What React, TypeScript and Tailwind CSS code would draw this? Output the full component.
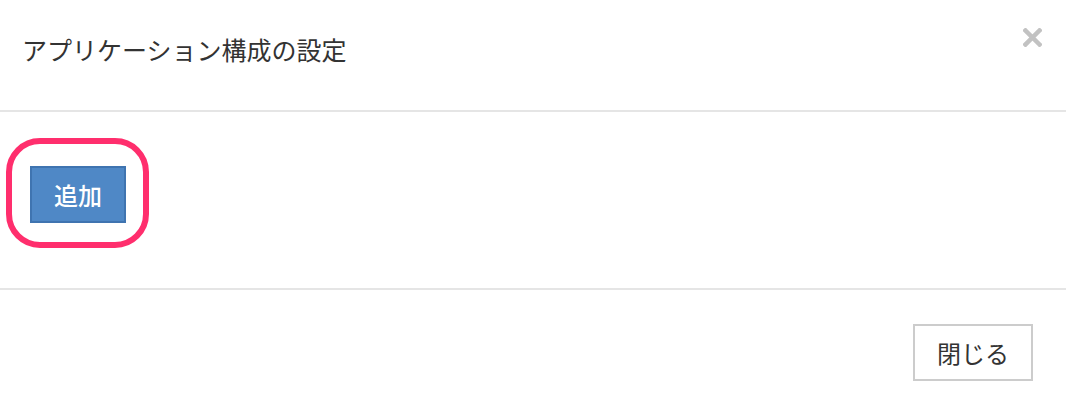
export default function App() {
  const font = { fontFamily: '"Noto Sans CJK JP", "Noto Sans", sans-serif' };
  return (
    <div className="w-[1066px] h-[412px] bg-white text-[#333]" style={font}>
      <div className="relative h-[112px] border-b-2 border-[#e5e5e5] pl-[22px] pt-[31px]">
        <h4 className="text-[25px] leading-[36px] font-normal">アプリケーション構成の設定</h4>
        <button className="absolute right-[24px] top-[28px] w-[19px] h-[19px]" aria-label="close">
          <svg width="19" height="19" viewBox="0 0 19 19">
            <path d="M2.5 2.5 L16.5 16.5 M16.5 2.5 L2.5 16.5" stroke="#c2c2c2" strokeWidth="4.5" strokeLinecap="square" />
          </svg>
        </button>
      </div>
      <div className="relative h-[178px] border-b-2 border-[#e5e5e5] pl-[30px] pt-[54px]">
        <button className="w-[96px] h-[57px] bg-[#4f88c6] border-2 border-[#3f74b0] text-white text-[24px] leading-none font-medium">
          追加
        </button>
        <div className="absolute left-[6px] top-[26px] w-[143px] h-[110px] rounded-[34px] border-[6px] border-[#ff2e6d]" />
      </div>
      <div className="flex justify-end pr-[33px] pt-[34px]">
        <button className="w-[120px] h-[57px] bg-white border-2 border-[#cccccc] text-[24px] leading-none text-[#333]">
          閉じる
        </button>
      </div>
    </div>
  );
}
